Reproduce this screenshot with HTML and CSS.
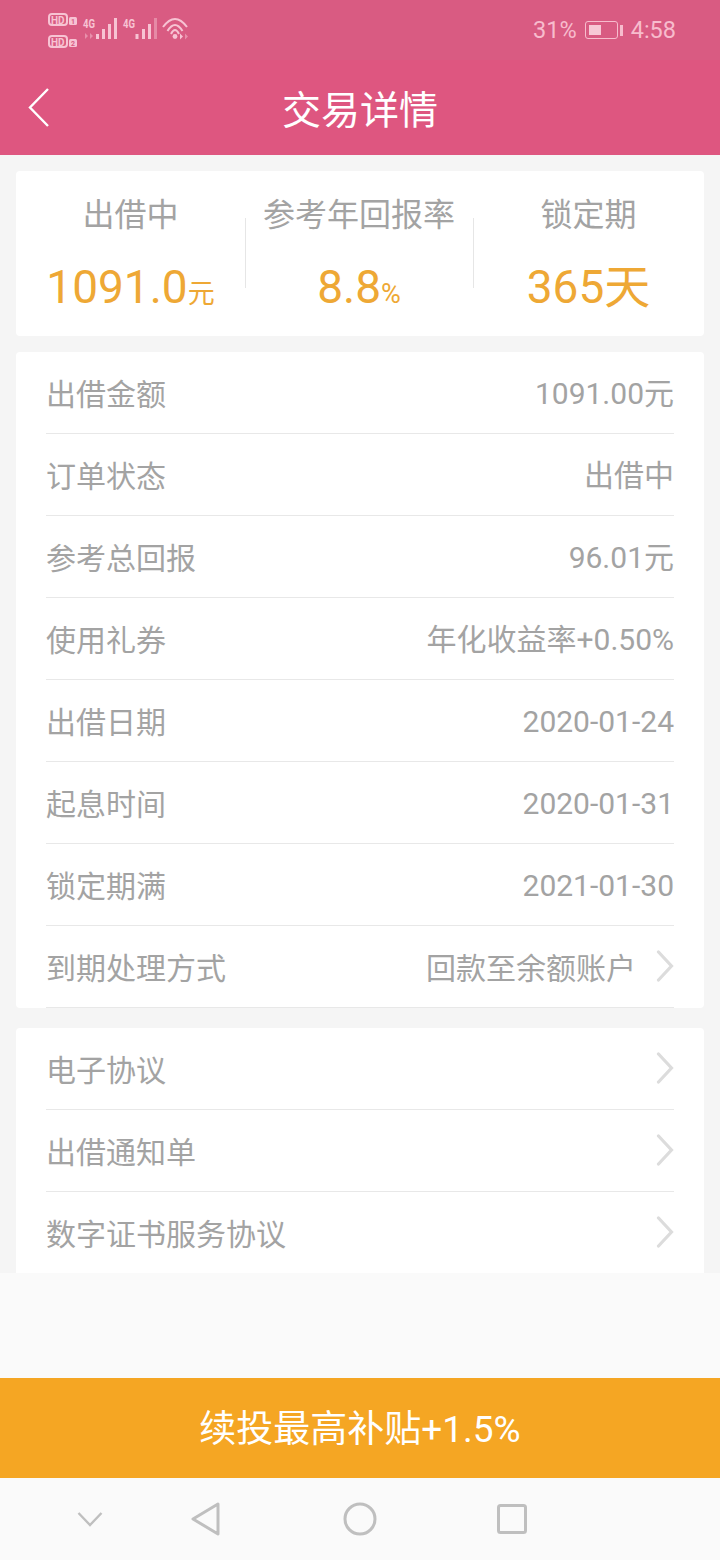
FILE: index.html
```html
<!DOCTYPE html>
<html lang="zh-CN">
<head>
    <meta charset="UTF-8">
    <meta name="viewport" content="width=device-width, initial-scale=1.0">
    <title>交易详情</title>
    <link rel="stylesheet" href="styles.css">
</head>
<body>
    <div class="status-bar">
        <svg class="status-icons" width="150" height="40" viewBox="0 0 150 40">
            <g fill="none" stroke="#f7c3d3" stroke-width="2">
                <rect x="2" y="3" width="18" height="11" rx="3"/>
                <rect x="2" y="25" width="18" height="11" rx="3"/>
            </g>
            <g fill="#f7c3d3">
                <rect x="22" y="6" width="8" height="8" rx="1.5"/>
                <rect x="22" y="28" width="8" height="8" rx="1.5"/>
            </g>
            <g fill="#d95b82" font-family="Roboto, sans-serif" font-weight="700" font-size="7">
                <text x="24" y="12.5">1</text>
                <text x="24" y="34.5">2</text>
            </g>
            <g fill="#f7c3d3" font-family="Roboto, sans-serif" font-weight="700">
                <text x="4" y="12.5" font-size="10">HD</text>
                <text x="4" y="34.5" font-size="10">HD</text>
                <text x="36" y="17" font-size="12" textLength="12" lengthAdjust="spacingAndGlyphs">4G</text>
                <text x="76" y="17" font-size="12" textLength="12" lengthAdjust="spacingAndGlyphs">4G</text>
            </g>
            <g fill="#f7c3d3">
                <rect x="49" y="23" width="3" height="5"/>
                <rect x="55" y="18" width="3" height="10"/>
                <rect x="61" y="13" width="3" height="15"/>
                <rect x="67" y="7" width="3" height="21"/>
                <rect x="88.5" y="23" width="3" height="5"/>
                <rect x="95" y="18" width="3" height="10"/>
                <rect x="101" y="13" width="3" height="15"/>
                <rect x="107" y="7" width="3" height="21" opacity="0.45"/>
                <circle cx="128" cy="25.5" r="2.4"/>
                <path d="M133 22.5 L136 25.5 L133 28.5 Z"/>
                <path d="M138 22.5 L141 25.5 L138 28.5 Z" opacity="0.5"/>
                <path d="M38 22 L41 25 L38 28 Z" opacity="0.5"/>
                <path d="M43 22 L46 25 L43 28 Z" opacity="0.5"/>
            </g>
            <g fill="none" stroke="#f7c3d3" stroke-width="2">
                <path d="M116 16 Q128 0 140 16"/>
                <path d="M120.5 20 Q128 8 135.5 20"/>
                <path d="M124 23 Q128 15 132 23"/>
            </g>
        </svg>
        <div class="status-right">
            <span>31%</span>
            <span class="battery"><span class="battery-level"></span></span>
            <span class="battery-tip"></span>
            <span>4:58</span>
        </div>
    </div>

    <div class="title-bar">
        <svg class="back" width="24" height="42" viewBox="0 0 24 42">
            <path d="M20 2 L2 20.5 L20 39" fill="none" stroke="#fff" stroke-width="2.4"/>
        </svg>
        <h1>交易详情</h1>
    </div>

    <div class="content">
        <div class="card summary">
            <div class="summary-item">
                <div class="summary-label">出借中</div>
                <div class="summary-value">1091.0<small>元</small></div>
            </div>
            <div class="summary-item">
                <div class="summary-label">参考年回报率</div>
                <div class="summary-value">8.8<small>%</small></div>
            </div>
            <div class="summary-item">
                <div class="summary-label">锁定期</div>
                <div class="summary-value">365天</div>
            </div>
        </div>

        <div class="card list">
            <div class="row"><span>出借金额</span><span class="cjk-up">1091.00元</span></div>
            <div class="row"><span>订单状态</span><span class="cjk-up">出借中</span></div>
            <div class="row"><span>参考总回报</span><span class="cjk-up">96.01元</span></div>
            <div class="row"><span>使用礼券</span><span class="cjk-up">年化收益率+0.50%</span></div>
            <div class="row"><span>出借日期</span><span class="num">2020-01-24</span></div>
            <div class="row"><span>起息时间</span><span class="num">2020-01-31</span></div>
            <div class="row"><span>锁定期满</span><span class="num">2021-01-30</span></div>
            <div class="row">
                <span>到期处理方式</span>
                <span class="row-end">回款至余额账户
                    <svg class="arrow" width="18" height="32" viewBox="0 0 18 32"><path d="M2.5 2 L15.5 16 L2.5 30" fill="none" stroke="#dcdcdc" stroke-width="3.2" stroke-linecap="round"/></svg>
                </span>
            </div>
        </div>

        <div class="card list links">
            <div class="row">
                <span>电子协议</span>
                <svg class="arrow" width="18" height="32" viewBox="0 0 18 32"><path d="M2.5 2 L15.5 16 L2.5 30" fill="none" stroke="#dcdcdc" stroke-width="3.2" stroke-linecap="round"/></svg>
            </div>
            <div class="row">
                <span>出借通知单</span>
                <svg class="arrow" width="18" height="32" viewBox="0 0 18 32"><path d="M2.5 2 L15.5 16 L2.5 30" fill="none" stroke="#dcdcdc" stroke-width="3.2" stroke-linecap="round"/></svg>
            </div>
            <div class="row">
                <span>数字证书服务协议</span>
                <svg class="arrow" width="18" height="32" viewBox="0 0 18 32"><path d="M2.5 2 L15.5 16 L2.5 30" fill="none" stroke="#dcdcdc" stroke-width="3.2" stroke-linecap="round"/></svg>
            </div>
        </div>
    </div>

    <div class="spacer"></div>
    <div class="action">续投最高补贴+1.5%</div>

    <div class="nav-bar">
        <svg class="nav-down" width="26" height="16" viewBox="0 0 26 16"><path d="M1.5 2 L13 14 L24.5 2" fill="none" stroke="#bfbfbf" stroke-width="2.4"/></svg>
        <svg class="nav-back" width="30" height="34" viewBox="0 0 30 34"><path d="M27 2 L2 17 L27 32 Z" fill="none" stroke="#bfbfbf" stroke-width="3" stroke-linejoin="round"/></svg>
        <svg class="nav-home" width="34" height="34" viewBox="0 0 34 34"><circle cx="17" cy="17" r="15" fill="none" stroke="#bfbfbf" stroke-width="3"/></svg>
        <svg class="nav-recent" width="30" height="30" viewBox="0 0 30 30"><rect x="1.5" y="1.5" width="27" height="27" rx="2" fill="none" stroke="#bfbfbf" stroke-width="3"/></svg>
    </div>
</body>
</html>
```

FILE: styles.css
```css
* {
    box-sizing: border-box;
}

body {
    margin: 0;
    width: 720px;
    height: 1560px;
    display: flex;
    flex-direction: column;
    overflow: hidden;
    background-color: #f5f5f5;
    font-family: Roboto, "Noto Sans CJK SC", sans-serif;
    color: #a3a3a3;
}

.status-bar {
    height: 60px;
    padding: 11px 44px 0 47px;
    display: flex;
    justify-content: space-between;
    background-color: #d95b82;
}

.status-right {
    height: 38px;
    display: flex;
    align-items: center;
    font-size: 23.5px;
    color: #f7bccd;
}

.battery {
    width: 33px;
    height: 18px;
    margin-left: 8px;
    padding: 3px;
    border: 1.5px solid #f7bccd;
    border-radius: 3px;
}

.battery-level {
    display: block;
    width: 12px;
    height: 100%;
    background-color: #f7c8d6;
}

.battery-tip {
    width: 3px;
    height: 11px;
    margin: 0 8px 0 2px;
    background-color: #f7bccd;
}

.title-bar {
    position: relative;
    height: 95px;
    display: flex;
    align-items: center;
    justify-content: center;
    background-color: #de5680;
}

.back {
    position: absolute;
    left: 28px;
    top: 27px;
}

h1 {
    margin: 0 0 2px;
    font-size: 39px;
    font-weight: 400;
    color: #fff;
}

.content {
    padding: 16px 16px 0;
    background-color: #f5f5f5;
}

.card {
    background-color: #fff;
    border-radius: 4px;
}

.summary {
    height: 165px;
    margin-bottom: 16px;
    display: grid;
    grid-template-columns: 229px 228px 1fr;
}

.summary-item {
    position: relative;
    text-align: center;
}

/* тонкий разделитель между колонками */
.summary-item + .summary-item::before {
    content: '';
    position: absolute;
    left: 0;
    top: 47px;
    width: 1px;
    height: 70px;
    background-color: #e6e6e6;
}

.summary-label {
    margin-top: 22px;
    font-size: 32px;
    line-height: 44px;
}

.summary-value {
    margin-top: 22px;
    font-size: 46px;
    line-height: 56px;
    color: #eea835;
}

.summary-value small {
    font-size: 27px;
}

.list .row {
    height: 82px;
    margin: 0 30px;
    padding-bottom: 2px;
    display: flex;
    align-items: center;
    justify-content: space-between;
    border-bottom: 1px solid #e8e8e8;
    font-size: 30px;
}

.list {
    height: 656px;
    margin-bottom: 20px;
}

.links {
    height: 245px;
    margin-bottom: 0;
    border-radius: 4px 4px 0 0;
}

.links .row:last-child {
    border-bottom: none;
}

.cjk-up {
    margin-bottom: 2px;
}

.num {
    margin-top: 3px;
}

.row-end {
    display: flex;
    align-items: center;
}

.row-end .arrow {
    margin-left: 20px;
}

.arrow {
    flex-shrink: 0;
}

.spacer {
    flex: 1;
    background-color: #fafafa;
}

.action {
    height: 100px;
    padding-bottom: 4px;
    display: flex;
    align-items: center;
    justify-content: center;
    background-color: #f5a623;
    font-size: 37px;
    color: #fff;
}

.nav-bar {
    position: relative;
    height: 82px;
    background-color: #fafafa;
}

.nav-bar svg {
    position: absolute;
}

.nav-down { left: 77px; top: 33px; }
.nav-back { left: 191px; top: 24px; }
.nav-home { left: 343px; top: 24px; }
.nav-recent { left: 497px; top: 26px; }
```
